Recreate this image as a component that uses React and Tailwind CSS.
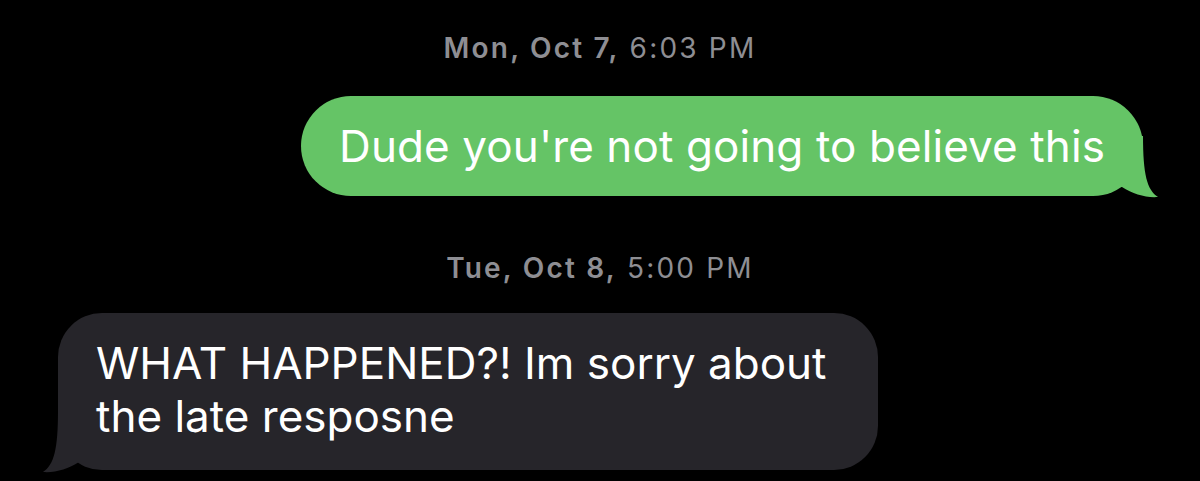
import React from 'react';

const font = { fontFamily: 'Inter, "Liberation Sans", sans-serif' };

function Tail({ color, side }) {
  // tail that hangs off the bottom corner of a bubble
  const pos = side === 'right' ? '-right-[20px] bottom-[-2px]' : '-left-[20px] bottom-[-3px] -scale-x-100';
  return (
    <svg className={`absolute ${pos}`} width="50" height="70" viewBox="0 0 50 70">
      <path d="M0 8 L30 8 C30 46 34 62 45 69 C33 70 20 66 9 59 L0 59 Z" fill={color} />
    </svg>
  );
}

function Stamp({ day, time }) {
  return (
    <div className="text-center text-[28px] tracking-[2.2px] text-[#8e8e93] leading-none">
      <span className="font-semibold">{day}</span> {time}
    </div>
  );
}

export default function App() {
  return (
    <div className="w-[1200px] h-[481px] bg-black overflow-hidden flex flex-col" style={font}>
      <div className="pt-[34px]">
        <Stamp day="Mon, Oct 7," time="6:03 PM" />
      </div>

      <div className="flex justify-end pr-[57px] mt-[34px]">
        <div className="relative bg-[#65c466] rounded-[50px] h-[100px] pl-[38px] pr-[38px] flex items-center">
          <span className="text-white text-[44px] tracking-[0.1px] leading-none whitespace-nowrap">Dude you're not going to believe this</span>
          <Tail color="#65c466" side="right" />
        </div>
      </div>

      <div className="mt-[58px]">
        <Stamp day="Tue, Oct 8," time="5:00 PM" />
      </div>

      <div className="flex justify-start pl-[58px] mt-[31px]">
        <div className="relative bg-[#26252a] rounded-[44px] w-[820px] h-[157px] pl-[38px] pr-[20px] pt-[24px]">
          <p className="text-white text-[44px] leading-[53px] whitespace-nowrap">WHAT HAPPENED?! Im sorry about<br />the late resposne</p>
          <Tail color="#26252a" side="left" />
        </div>
      </div>
    </div>
  );
}
